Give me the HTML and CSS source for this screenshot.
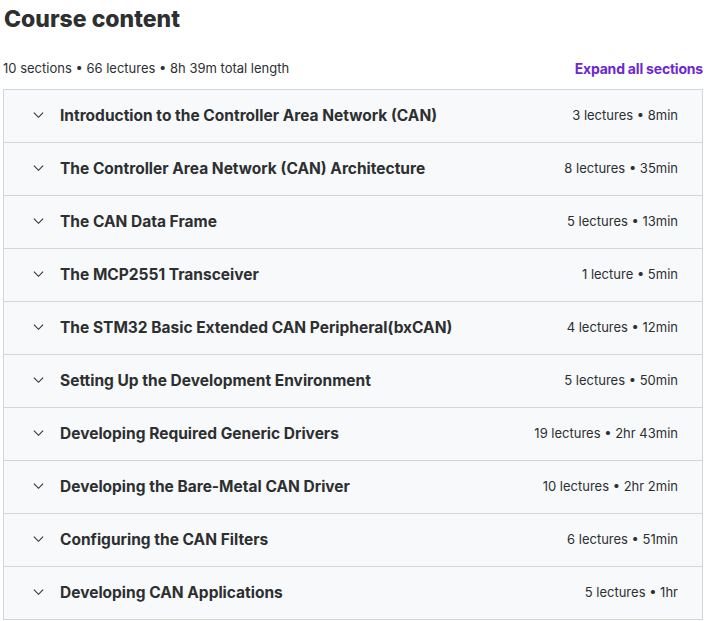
FILE: index.html
```html
<!DOCTYPE html>
<html>
<head>
<meta charset="utf-8">
<link rel="stylesheet" href="styles.css">
</head>
<body>
<div class="page">
  <h2 class="title">Course content</h2>
  <div class="meta">
    <span class="stats">10 sections • 66 lectures • 8h 39m total length</span>
    <button class="expand">Expand all sections</button>
  </div>
  <div class="sections">
    <div class="row"><svg class="chev" viewBox="0 0 12 8"><path d="M1 1.5 L6 6.5 L11 1.5"/></svg><span class="name">Introduction to the Controller Area Network (CAN)</span><span class="info">3 lectures • 8min</span></div>
    <div class="row"><svg class="chev" viewBox="0 0 12 8"><path d="M1 1.5 L6 6.5 L11 1.5"/></svg><span class="name">The Controller Area Network (CAN) Architecture</span><span class="info">8 lectures • 35min</span></div>
    <div class="row"><svg class="chev" viewBox="0 0 12 8"><path d="M1 1.5 L6 6.5 L11 1.5"/></svg><span class="name">The CAN Data Frame</span><span class="info">5 lectures • 13min</span></div>
    <div class="row"><svg class="chev" viewBox="0 0 12 8"><path d="M1 1.5 L6 6.5 L11 1.5"/></svg><span class="name">The MCP2551 Transceiver</span><span class="info">1 lecture • 5min</span></div>
    <div class="row"><svg class="chev" viewBox="0 0 12 8"><path d="M1 1.5 L6 6.5 L11 1.5"/></svg><span class="name">The STM32 Basic Extended CAN Peripheral(bxCAN)</span><span class="info">4 lectures • 12min</span></div>
    <div class="row"><svg class="chev" viewBox="0 0 12 8"><path d="M1 1.5 L6 6.5 L11 1.5"/></svg><span class="name">Setting Up the Development Environment</span><span class="info">5 lectures • 50min</span></div>
    <div class="row"><svg class="chev" viewBox="0 0 12 8"><path d="M1 1.5 L6 6.5 L11 1.5"/></svg><span class="name">Developing Required Generic Drivers</span><span class="info">19 lectures • 2hr 43min</span></div>
    <div class="row"><svg class="chev" viewBox="0 0 12 8"><path d="M1 1.5 L6 6.5 L11 1.5"/></svg><span class="name">Developing the Bare-Metal CAN Driver</span><span class="info">10 lectures • 2hr 2min</span></div>
    <div class="row"><svg class="chev" viewBox="0 0 12 8"><path d="M1 1.5 L6 6.5 L11 1.5"/></svg><span class="name">Configuring the CAN Filters</span><span class="info">6 lectures • 51min</span></div>
    <div class="row"><svg class="chev" viewBox="0 0 12 8"><path d="M1 1.5 L6 6.5 L11 1.5"/></svg><span class="name">Developing CAN Applications</span><span class="info">5 lectures • 1hr</span></div>
  </div>
</div>
</body>
</html>
```
FILE: styles.css
```css
* { box-sizing: border-box; }
html, body { margin: 0; padding: 0; background: #fff; }
body { font-family: Inter, "Noto Sans", sans-serif; color: #2d2f31; }
.page { padding: 0 3px 0 3px; width: 706px; }
.title {
  margin: 0;
  padding: 3px 0 0 1px;
  font-size: 23px;
  line-height: 32px;
  font-weight: 800;
}
.meta {
  display: flex;
  justify-content: space-between;
  align-items: center;
  margin-top: 21px;
  height: 24px;
}
.stats { font-size: 13px; color: #2d2f31; }
.expand {
  border: 0; background: none; padding: 0;
  font-family: inherit; font-size: 14px; font-weight: 700;
  letter-spacing: -0.2px;
  color: #6d28d2; cursor: pointer;
}
.sections {
  margin-top: 9px;
  border: 1px solid #d1d7dc;
  border-bottom: 0;
  width: 700px;
}
.row {
  display: flex;
  align-items: center;
  height: 53px;
  background: #f7f9fa;
  border-bottom: 1px solid #d1d7dc;
  padding: 0 24px 2px 29px;
}
.chev {
  width: 11px; height: 8px;
  fill: none; stroke: #2d2f31; stroke-width: 1.2;
  margin-right: 16px;
  flex: none;
}
.name { flex: 1; font-size: 15.5px; font-weight: 700; }
.info { font-size: 13px; }
```
